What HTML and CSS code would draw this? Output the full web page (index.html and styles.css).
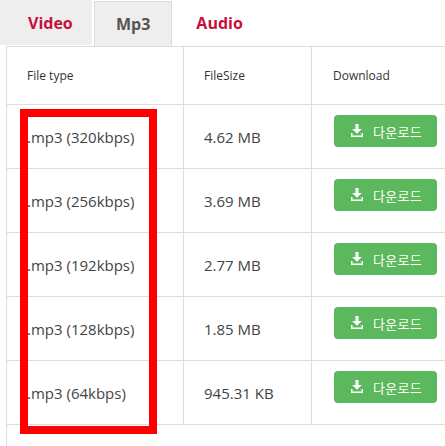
FILE: index.html
```html
<!DOCTYPE html>
<html>
<head>
<meta charset="utf-8">
<link rel="stylesheet" href="styles.css">
</head>
<body>
<div class="page">
  <ul class="tabs">
    <li class="tab tab-video">Video</li>
    <li class="tab tab-mp3">Mp3</li>
    <li class="tab tab-audio">Audio</li>
  </ul>
  <div class="panel">
    <div class="row head">
      <div class="cell">File type</div>
      <div class="cell">FileSize</div>
      <div class="cell dlh">Download</div>
    </div>
    <div class="row">
      <div class="cell">.mp3 (320kbps)</div>
      <div class="cell">4.62 MB</div>
      <div class="cell dl"><a class="btn"><svg width="12" height="13" viewBox="0 0 12 13"><rect x="4.5" y="0" width="3" height="5" fill="#fff"/><polygon points="1.2,5 10.8,5 6,9.8" fill="#fff"/><path d="M0 9 V13 H12 V9 H10.5 V11.5 H1.5 V9 Z" fill="#fff"/></svg><span>다운로드</span></a></div>
    </div>
    <div class="row">
      <div class="cell">.mp3 (256kbps)</div>
      <div class="cell">3.69 MB</div>
      <div class="cell dl"><a class="btn"><svg width="12" height="13" viewBox="0 0 12 13"><rect x="4.5" y="0" width="3" height="5" fill="#fff"/><polygon points="1.2,5 10.8,5 6,9.8" fill="#fff"/><path d="M0 9 V13 H12 V9 H10.5 V11.5 H1.5 V9 Z" fill="#fff"/></svg><span>다운로드</span></a></div>
    </div>
    <div class="row">
      <div class="cell">.mp3 (192kbps)</div>
      <div class="cell">2.77 MB</div>
      <div class="cell dl"><a class="btn"><svg width="12" height="13" viewBox="0 0 12 13"><rect x="4.5" y="0" width="3" height="5" fill="#fff"/><polygon points="1.2,5 10.8,5 6,9.8" fill="#fff"/><path d="M0 9 V13 H12 V9 H10.5 V11.5 H1.5 V9 Z" fill="#fff"/></svg><span>다운로드</span></a></div>
    </div>
    <div class="row">
      <div class="cell">.mp3 (128kbps)</div>
      <div class="cell">1.85 MB</div>
      <div class="cell dl"><a class="btn"><svg width="12" height="13" viewBox="0 0 12 13"><rect x="4.5" y="0" width="3" height="5" fill="#fff"/><polygon points="1.2,5 10.8,5 6,9.8" fill="#fff"/><path d="M0 9 V13 H12 V9 H10.5 V11.5 H1.5 V9 Z" fill="#fff"/></svg><span>다운로드</span></a></div>
    </div>
    <div class="row">
      <div class="cell">.mp3 (64kbps)</div>
      <div class="cell">945.31 KB</div>
      <div class="cell dl"><a class="btn"><svg width="12" height="13" viewBox="0 0 12 13"><rect x="4.5" y="0" width="3" height="5" fill="#fff"/><polygon points="1.2,5 10.8,5 6,9.8" fill="#fff"/><path d="M0 9 V13 H12 V9 H10.5 V11.5 H1.5 V9 Z" fill="#fff"/></svg><span>다운로드</span></a></div>
    </div>
  </div>
  <div class="highlight"></div>
</div>
</body>
</html>
```
FILE: styles.css
```css
html, body {
  margin: 0;
  padding: 0;
  background: #fff;
  overflow: hidden;
  width: 445px;
  height: 446px;
}
.page {
  position: relative;
  width: 445px;
  height: 446px;
  overflow: hidden;
  font-family: "Open Sans", "Noto Sans CJK KR", sans-serif;
  color: #333;
}
.tabs {
  list-style: none;
  margin: 0;
  padding: 0;
  display: flex;
  height: 46px;
  gap: 2px;
}
.tab {
  box-sizing: border-box;
  padding: 0 21px;
  height: 45px;
  display: flex;
  align-items: center;
  font-size: 16px;
  font-weight: 700;
  color: #c80f3c;
  border: 1px solid transparent;
  border-bottom: none;
}
.tab-video {
  background: #eeeeee;
  padding-left: 27px;
  width: 92px;
}
.tab-mp3 {
  background: #eeeeee;
  border-color: #dddddd;
  color: #555;
  margin-top: 1px;
}
.panel {
  margin-left: 6px;
  border-left: 1px solid #dddddd;
  border-top: 1px solid #dddddd;
  height: 400px;
  width: 520px;
}
.row {
  display: grid;
  grid-template-columns: 177px 128px 214px;
  height: 63px;
  border-bottom: 1px solid #dddddd;
}
.row.head {
  height: 57px;
}
.cell {
  box-sizing: border-box;
  border-right: 1px solid #dddddd;
  padding: 0 20px;
  display: flex;
  align-items: center;
  font-size: 15px;
  color: #444;
  white-space: nowrap;
}
.head .cell {
  font-size: 12px;
  padding-bottom: 1px;
  color: #333;
}
.head .dlh {
  padding-left: 21px;
}
.cell.dl {
  align-items: flex-start;
  padding-top: 10px;
  padding-left: 22px;
}
.btn {
  display: inline-flex;
  align-items: center;
  box-sizing: border-box;
  width: 103px;
  height: 32px;
  padding-left: 17px;
  background: #5cb85c;
  border-radius: 4px;
  color: #fff;
  font-family: "Noto Sans CJK KR", sans-serif;
  font-size: 13px;
}
.btn svg {
  margin-right: 10px;
  margin-top: -1px;
}
.btn span {
  letter-spacing: 0.3px;
}
.highlight {
  position: absolute;
  left: 20px;
  top: 109px;
  width: 121px;
  height: 309px;
  border: 8px solid #ff0000;
}
```
